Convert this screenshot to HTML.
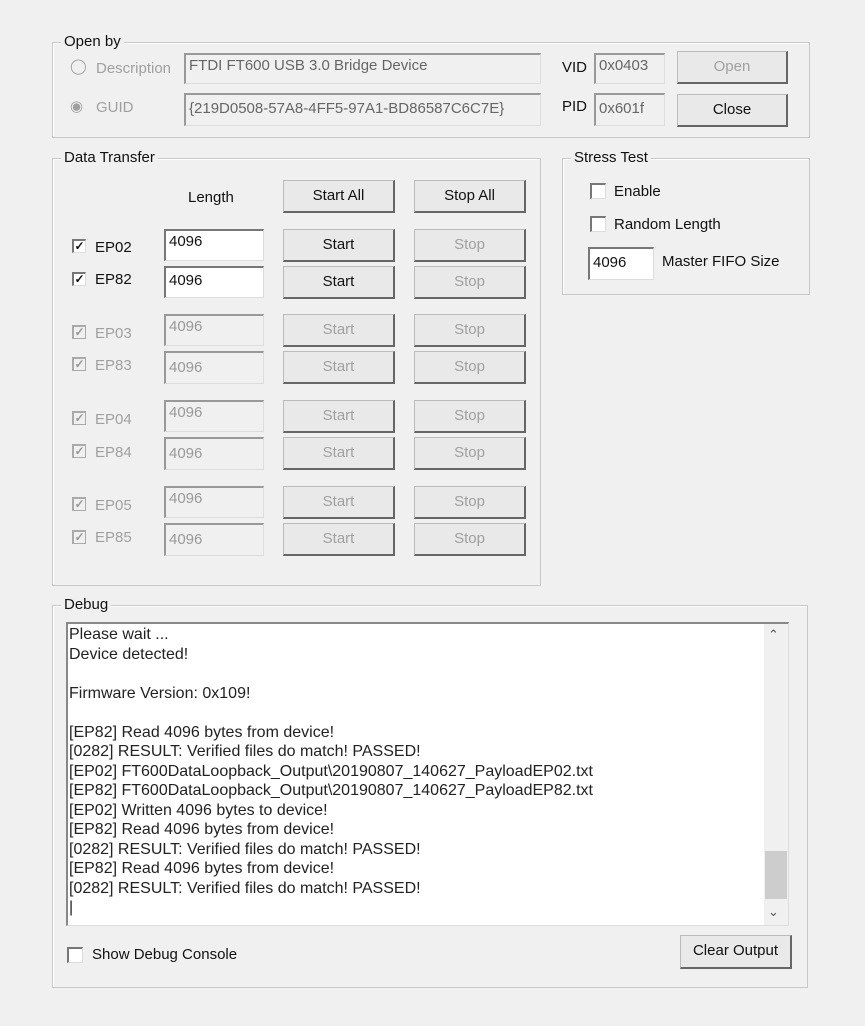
<!DOCTYPE html>
<html><head><meta charset="utf-8"><style>
body{margin:0;width:865px;height:1026px;background:#f0f0f0;position:relative;overflow:hidden;font-family:"Liberation Sans",sans-serif;font-size:15px;color:#111;}
div,span{position:absolute;box-sizing:border-box;}
.g{border:1px solid #c8c8c8;box-shadow:inset 1px 1px 0 #fff;}
.gl{background:#f0f0f0;padding:0 3px;line-height:16px;top:-9px;left:8px;white-space:nowrap;}
.b{background:#e9e9e9;border:1px solid #bbb;border-right:2px solid #666;border-bottom:2px solid #666;text-align:center;line-height:29px;}
.d{color:#a0a0a0;}
.i{background:#fff;border-top:2px solid #777;border-left:2px solid #777;border-right:1px solid #ddd;border-bottom:1px solid #ddd;padding-left:3px;line-height:22px;}
.id{background:#f0f0f0;color:#999;border-top:2px solid #999;border-left:2px solid #999;border-right:1px solid #ddd;border-bottom:1px solid #ddd;padding-left:3px;line-height:22px;}
.c{width:14px;height:14px;background:#fff;border-top:2px solid #777;border-left:2px solid #777;border-right:1px solid #ddd;border-bottom:1px solid #ddd;font-size:12px;line-height:11px;text-align:center;font-weight:bold;}
.cd{background:#f0f0f0;color:#999;border-color:#aaa;}
.t{white-space:nowrap;line-height:18px;}
</style></head><body>
<div class="g" style="left:52px;top:42px;width:758px;height:96px"><span class="gl">Open by</span></div>
<div class="t d" style="left:70px;top:58px">&#9711;</div>
<div class="t d" style="left:96px;top:60px">Description</div>
<div class="id" style="left:184px;top:53px;width:357px;height:31px;color:#666">FTDI FT600 USB 3.0 Bridge Device</div>
<div class="t" style="left:562px;top:59px">VID</div>
<div class="id" style="left:594px;top:53px;width:71px;height:31px;color:#666">0x0403</div>
<div class="b d" style="left:677px;top:51px;width:111px;height:33px">Open</div>
<div class="t d" style="left:70px;top:98px">&#9673;</div>
<div class="t d" style="left:96px;top:99px">GUID</div>
<div class="id" style="left:184px;top:93px;width:357px;height:33px;line-height:28px;color:#666">{219D0508-57A8-4FF5-97A1-BD86587C6C7E}</div>
<div class="t" style="left:562px;top:98px">PID</div>
<div class="id" style="left:594px;top:93px;width:71px;height:33px;line-height:28px;color:#666">0x601f</div>
<div class="b" style="left:677px;top:94px;width:111px;height:33px">Close</div>

<div class="g" style="left:52px;top:158px;width:489px;height:428px"><span class="gl">Data Transfer</span></div>
<div class="t" style="left:188px;top:189px">Length</div>
<div class="b" style="left:283px;top:180px;width:112px;height:33px">Start All</div>
<div class="b" style="left:414px;top:180px;width:112px;height:33px">Stop All</div>

<div class="c" style="left:72px;top:239px">&#10003;</div><div class="t" style="left:95px;top:239px">EP02</div>
<div class="i" style="left:164px;top:229px;width:100px;height:32px">4096</div>
<div class="b" style="left:283px;top:229px;width:112px;height:33px">Start</div>
<div class="b d" style="left:414px;top:229px;width:112px;height:33px">Stop</div>

<div class="c" style="left:72px;top:272px">&#10003;</div><div class="t" style="left:95px;top:271px">EP82</div>
<div class="i" style="left:164px;top:266px;width:100px;height:32px;line-height:26px">4096</div>
<div class="b" style="left:283px;top:266px;width:112px;height:33px">Start</div>
<div class="b d" style="left:414px;top:266px;width:112px;height:33px">Stop</div>

<div class="c cd" style="left:72px;top:325px">&#10003;</div><div class="t d" style="left:95px;top:325px">EP03</div>
<div class="id" style="left:164px;top:314px;width:100px;height:32px">4096</div>
<div class="b d" style="left:283px;top:314px;width:112px;height:33px">Start</div>
<div class="b d" style="left:414px;top:314px;width:112px;height:33px">Stop</div>

<div class="c cd" style="left:72px;top:357px">&#10003;</div><div class="t d" style="left:95px;top:357px">EP83</div>
<div class="id" style="left:164px;top:351px;width:100px;height:33px;line-height:30px">4096</div>
<div class="b d" style="left:283px;top:351px;width:112px;height:33px">Start</div>
<div class="b d" style="left:414px;top:351px;width:112px;height:33px">Stop</div>

<div class="c cd" style="left:72px;top:411px">&#10003;</div><div class="t d" style="left:95px;top:411px">EP04</div>
<div class="id" style="left:164px;top:400px;width:100px;height:32px">4096</div>
<div class="b d" style="left:283px;top:400px;width:112px;height:33px">Start</div>
<div class="b d" style="left:414px;top:400px;width:112px;height:33px">Stop</div>

<div class="c cd" style="left:72px;top:444px">&#10003;</div><div class="t d" style="left:95px;top:444px">EP84</div>
<div class="id" style="left:164px;top:437px;width:100px;height:33px;line-height:30px">4096</div>
<div class="b d" style="left:283px;top:437px;width:112px;height:33px">Start</div>
<div class="b d" style="left:414px;top:437px;width:112px;height:33px">Stop</div>

<div class="c cd" style="left:72px;top:497px">&#10003;</div><div class="t d" style="left:95px;top:497px">EP05</div>
<div class="id" style="left:164px;top:486px;width:100px;height:32px">4096</div>
<div class="b d" style="left:283px;top:486px;width:112px;height:33px">Start</div>
<div class="b d" style="left:414px;top:486px;width:112px;height:33px">Stop</div>

<div class="c cd" style="left:72px;top:530px">&#10003;</div><div class="t d" style="left:95px;top:529px">EP85</div>
<div class="id" style="left:164px;top:523px;width:100px;height:33px;line-height:30px">4096</div>
<div class="b d" style="left:283px;top:523px;width:112px;height:33px">Start</div>
<div class="b d" style="left:414px;top:523px;width:112px;height:33px">Stop</div>

<div class="g" style="left:562px;top:158px;width:248px;height:137px"><span class="gl">Stress Test</span></div>
<div class="c" style="left:590px;top:183px;width:16px;height:16px"></div><div class="t" style="left:614px;top:183px">Enable</div>
<div class="c" style="left:590px;top:216px;width:16px;height:16px"></div><div class="t" style="left:614px;top:216px">Random Length</div>
<div class="i" style="left:588px;top:247px;width:66px;height:33px;line-height:28px">4096</div>
<div class="t" style="left:662px;top:253px">Master FIFO Size</div>

<div class="g" style="left:52px;top:605px;width:756px;height:383px"><span class="gl">Debug</span></div>
<div style="left:66px;top:622px;width:723px;height:304px;background:#fff;border-top:2px solid #888;border-left:2px solid #888;border-right:1px solid #ddd;border-bottom:1px solid #ddd"></div>
<div style="left:69px;top:625px;line-height:19.5px;white-space:pre;font-size:16px;color:#222">Please wait ...
Device detected!

Firmware Version: 0x109!

[EP82] Read 4096 bytes from device!
[0282] RESULT: Verified files do match! PASSED!
[EP02] FT600DataLoopback_Output\20190807_140627_PayloadEP02.txt
[EP82] FT600DataLoopback_Output\20190807_140627_PayloadEP82.txt
[EP02] Written 4096 bytes to device!
[EP82] Read 4096 bytes from device!
[0282] RESULT: Verified files do match! PASSED!
[EP82] Read 4096 bytes from device!
[0282] RESULT: Verified files do match! PASSED!
|</div>
<div style="left:764px;top:624px;width:24px;height:301px;background:#f0f0f0"></div>
<div class="t" style="left:768px;top:626px;font-size:13px;color:#555">&#8963;</div>
<div style="left:765px;top:851px;width:22px;height:48px;background:#cdcdcd"></div>
<div class="t" style="left:768px;top:903px;font-size:13px;color:#555">&#8964;</div>
<div class="c" style="left:67px;top:947px;width:16px;height:16px"></div>
<div class="t" style="left:92px;top:946px">Show Debug Console</div>
<div class="b" style="left:680px;top:935px;width:112px;height:34px">Clear Output</div>
</body></html>
